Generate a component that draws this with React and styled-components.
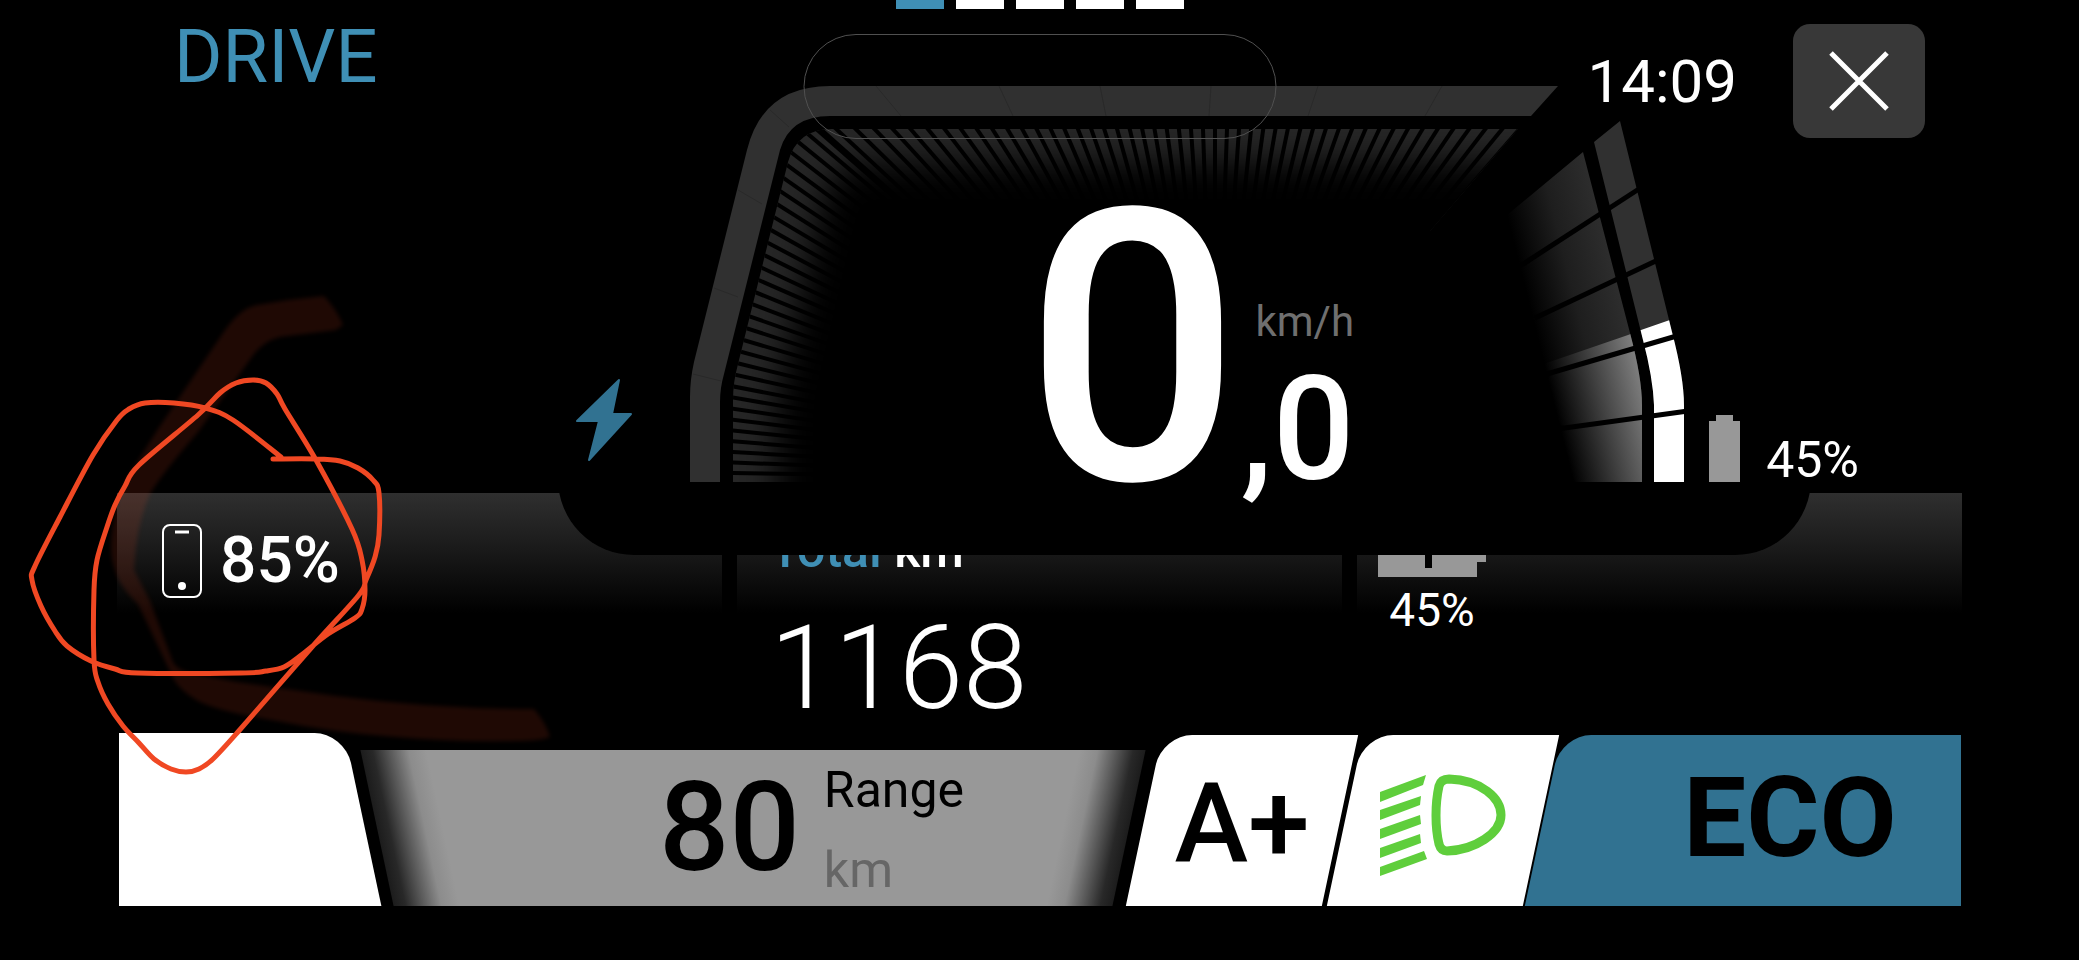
import React from "react";
import styled, { createGlobalStyle } from "styled-components";

const color = {
  black: "#000000",
  white: "#ffffff",
  blue: "#3f8fb5",
  deepBlue: "#317291",
  grey: "#989898",
  dim: "#6f6f6f",
  track: "#303030",
  green: "#5fce3c",
  marker: "#f04823",
};

const GlobalStyle = createGlobalStyle`
  * { box-sizing: border-box; }
  body { margin: 0; background: ${color.black}; }
  button { border: 0; padding: 0; background: none; font: inherit; cursor: pointer; }
  svg { display: block; }
`;

const Page = styled.main`
  position: relative;
  display: flex;
  flex-direction: column;
  min-height: 100vh;
  padding: 0 117px 54px;
  overflow: hidden;
  background: ${color.black};
  color: ${color.white};
  font-family: Roboto, "Liberation Sans", sans-serif;
`;

const Text = styled.span`
  display: block;
  font-size: ${(p) => p.$size}px;
  line-height: ${(p) => p.$line}px;
  font-weight: ${(p) => p.$weight || 400};
  color: ${(p) => p.$color || "inherit"};
  white-space: pre;
`;

/* ---------- header ---------- */

const Header = styled.header`
  position: relative;
  z-index: 2;
  display: grid;
  grid-template-columns: 1fr auto 1fr;
  align-items: start;
`;

const Mode = styled.h1`
  margin: 0;
  padding: 32px 0 0 57px;
  font-size: 74px;
  line-height: 50px;
  font-weight: 400;
  color: ${color.blue};
`;

const Pages = styled.div`
  display: flex;
  gap: 12px;
`;

const PageMark = styled.span`
  width: 48px;
  height: 9px;
  background: ${(p) => (p.$active ? color.blue : color.white)};
`;

const HeaderEnd = styled.div`
  display: flex;
  justify-content: flex-end;
  align-items: center;
  gap: 56px;
  padding: 24px 37px 0 0;
`;

const CloseButton = styled.button`
  display: grid;
  place-items: center;
  width: 132px;
  height: 114px;
  border-radius: 17px;
  background: #383838;
`;

const Pill = styled.div`
  position: absolute;
  top: 34px;
  left: 50%;
  width: 473px;
  height: 105px;
  transform: translateX(-50%);
  border: 1px solid #505050;
  border-radius: 53px;
`;

/* ---------- speed stage ---------- */

const StageRow = styled.section`
  position: relative;
  z-index: 1;
  display: grid;
  grid-template-columns: 441fr 1253fr 151fr;
  margin-top: -52px;
`;

const Stage = styled.div`
  grid-column: 2;
  display: grid;
  align-items: end;
  padding-bottom: 73px;
  border-radius: 0 0 76px 76px;
  background: ${color.black};

  > * {
    grid-area: 1 / 1;
  }
`;

const GaugeDrawing = styled.svg`
  width: 100%;
  height: auto;
`;

const BoltIcon = styled.svg`
  margin: 0 0 20px 17px;
`;

const Readout = styled.div`
  display: flex;
  align-items: flex-end;
  justify-self: center;
  margin-left: 10px;
  padding-bottom: 3px;
`;

const Fraction = styled.div`
  display: flex;
  flex-direction: column;
  gap: 45px;
`;

const Unit = styled.span`
  padding-left: 15px;
  font-size: 42px;
  line-height: 28px;
  color: ${color.dim};
`;

const Charge = styled.div`
  display: flex;
  justify-self: end;
  align-items: flex-end;
  gap: 26px;
  margin-right: -48px;
`;

/* ---------- information cards ---------- */

const Cards = styled.section`
  display: grid;
  grid-template-columns: repeat(3, 1fr);
  gap: 15px;
  min-height: 240px;
  margin-top: -62px;
`;

const Card = styled.article`
  padding: 31px 0 0 ${(p) => p.$inset}px;
  background: linear-gradient(#2f2f2f, #1d1d1d 48px, #000000 120px);
`;

const PhoneRow = styled.div`
  display: flex;
  align-items: center;
  gap: 18px;
`;

const Total = styled.div`
  display: flex;
  flex-direction: column;
  gap: 62px;
  padding-top: 9px;
`;

const Accent = styled.span`
  color: ${color.blue};
`;

const BatteryStack = styled.div`
  display: inline-flex;
  flex-direction: column;
  align-items: center;
  gap: 16px;
`;

/* ---------- footer tiles ---------- */

const Footer = styled.footer`
  display: flex;
  align-items: flex-end;
  margin: 0 1px 0 2px;
  overflow: hidden;
`;

const LeftTile = styled.div`
  position: relative;
  width: 244px;
  height: 173px;
  margin-right: 14px;

  &::before {
    content: "";
    position: absolute;
    inset: 0 0 0 -60px;
    transform: skewX(12deg);
    border-top-right-radius: 30px;
    background: ${color.white};
  }
`;

const fade = "#1c1c1c 0, #282828 12px, #555555 28px, #8c8c8c 48px, #989898 66px";

const RangeTile = styled.div`
  position: relative;
  flex: 1;
  display: flex;
  justify-content: center;
  align-items: center;
  gap: 24px;
  height: 156px;
  margin-right: 16px;
  padding-left: 118px;
  color: ${color.black};

  &::before,
  &::after {
    content: "";
    position: absolute;
    top: 0;
    bottom: 0;
  }

  &::before {
    left: 0;
    right: calc(50% - 40px);
    transform: skewX(12deg);
    background: linear-gradient(90deg, ${fade});
  }

  &::after {
    left: 50%;
    right: 0;
    transform: skewX(-12deg);
    background: linear-gradient(270deg, ${fade});
  }

  > * {
    position: relative;
    z-index: 1;
  }
`;

const RangeLabels = styled.div`
  display: flex;
  flex-direction: column;
  gap: 41px;
  padding-top: 5px;
`;

const Tile = styled.button`
  position: relative;
  display: flex;
  justify-content: center;
  align-items: center;
  width: ${(p) => p.$width}px;
  height: 171px;
  margin-right: ${(p) => p.$gap || 0}px;
  padding: ${(p) => (p.$last ? 0 : 8)}px 0 ${(p) => (p.$last ? 6 : 0)}px ${(p) => p.$inset || 0}px;
  color: ${color.black};

  &::before {
    content: "";
    position: absolute;
    inset: 0 ${(p) => (p.$last ? -60 : 0)}px 0 0;
    transform: skewX(-12deg);
    border-top-left-radius: 30px;
    background: ${(p) => p.$fill || color.white};
  }

  > * {
    position: relative;
  }
`;

const Sketch = styled.svg`
  position: absolute;
  top: 0;
  left: 0;
  z-index: 3;
  pointer-events: none;
`;

/* ---------- drawings ---------- */

const hub = [1215, 480];

const topTicks = Array.from({ length: 51 }, (_, i) => {
  const n = i - 27;
  return [1215 + 12 * n + 0.0038 * n * n * n, 129];
}).filter(([x]) => x > 800);

const sideTicks = Array.from({ length: 31 }, (_, n) => {
  const y = 473 - 10.4 * n - 0.054 * n * n;
  return [y < 380 ? 735 + (380 - y) * 0.25 : 733, y];
});

const seams = [
  [876, 86, 901, 116],
  [999, 86, 1013, 116],
  [1100, 86, 1106, 116],
  [1211, 86, 1209, 116],
  [1318, 86, 1308, 116],
  [1442, 86, 1425, 116],
  [770, 110, 789, 127],
  [738, 190, 762, 204],
  [714, 288, 738, 297],
  [693, 374, 721, 381],
];

const cellGaps = [
  [1520, 266, 1642, 187],
  [1535, 318, 1660, 259],
  [1540, 376, 1680, 335],
  [1550, 430, 1688, 411],
];

const barPath =
  "M1620 121 L1672 332 Q1684 378 1684 405 V482 H1654 V405 Q1653 378 1643 340 L1594 142 Z";
const glowPath =
  "M1583 152 L1630 333 Q1642 378 1642 405 V482 H1570 L1540 367 L1495 225 Z";
const litArea = "M1500 379 L1628 335 L1641 330 L1690 313 V490 H1500 Z";

function Gauge() {
  return (
    <GaugeDrawing viewBox="558 86 1253 396" aria-hidden="true">
      <defs>
        <clipPath id="ring">
          <path d="M733 482 V400 Q733 382 738 364 L788 162 Q797 129 832 129 H1518 L1430 231 V482 Z" />
        </clipPath>
        <clipPath id="lit">
          <path d={litArea} />
        </clipPath>
        <filter id="soft" x="-20%" y="-20%" width="140%" height="140%">
          <feGaussianBlur stdDeviation="18" />
        </filter>
        <linearGradient id="idle" gradientUnits="userSpaceOnUse" x1="1630" y1="333" x2="1542" y2="355">
          <stop offset="0" stopColor="#2d2d2d" />
          <stop offset="0.5" stopColor="#1e1e1e" />
          <stop offset="1" stopColor="#000000" />
        </linearGradient>
        <linearGradient id="charged" gradientUnits="userSpaceOnUse" x1="1630" y1="333" x2="1542" y2="355">
          <stop offset="0" stopColor="#7e7e7e" />
          <stop offset="0.5" stopColor="#404040" />
          <stop offset="1" stopColor="#000000" />
        </linearGradient>
      </defs>

      <path
        fill={color.track}
        d="M690 482 V397 Q690 380 694 362 L747 150 Q763 86 830 86 H1558 L1531 116 H830 Q790 116 780 150 L724 374 Q720 388 720 402 V482 Z"
      />
      {seams.map(([x1, y1, x2, y2]) => (
        <line key={x1} x1={x1} y1={y1} x2={x2} y2={y2} stroke="#292929" />
      ))}

      <g clipPath="url(#ring)">
        <rect x="730" y="120" width="800" height="370" fill="#262626" />
        {[...topTicks, ...sideTicks].map(([x, y]) => (
          <line
            key={`${x}-${y}`}
            x1={x - (hub[0] - x) * 0.05}
            y1={y - (hub[1] - y) * 0.05}
            x2={x + (hub[0] - x) * 0.35}
            y2={y + (hub[1] - y) * 0.35}
            stroke="#000000"
            strokeWidth="4"
          />
        ))}
        <path
          d="M776 640 V400 L822 200 Q830 162 870 162 H1700 V640 Z"
          fill="#000000"
          filter="url(#soft)"
        />
      </g>

      <path d={barPath} fill={color.track} />
      <path d={glowPath} fill="url(#idle)" />
      <g clipPath="url(#lit)">
        <path d={barPath} fill="#ffffff" />
        <path d={glowPath} fill="url(#charged)" />
      </g>
      {cellGaps.map(([x1, y1, x2, y2]) => (
        <line key={x1} x1={x1} y1={y1} x2={x2} y2={y2} stroke="#000000" strokeWidth="5" />
      ))}
    </GaugeDrawing>
  );
}

function HeadlightIcon() {
  return (
    <svg width="128" height="102" viewBox="1378 773 128 102" aria-hidden="true">
      <g fill={color.green}>
        <path d="M1379 791 L1425 774 L1422 784 L1379 801 Z" />
        <path d="M1379 809 L1420 795 L1419 804 L1379 819 Z" />
        <path d="M1379 828 L1419 814 L1420 823 L1379 838 Z" />
        <path d="M1379 847 L1419 833 L1420 842 L1379 857 Z" />
        <path d="M1379 866 L1423 850 L1426 858 L1379 875 Z" />
      </g>
      <path
        d="M1448 778 C1480 779 1500 797 1500 814 C1500 832 1474 849 1446 850 Q1440 850 1438 843 C1434 826 1434 803 1438 785 Q1440 778 1448 778 Z"
        fill="none"
        stroke={color.green}
        strokeWidth="9"
      />
    </svg>
  );
}

/* Turns a list of points into a smooth curve that passes through each one. */
function curve(points) {
  const at = (i) => points[Math.max(0, Math.min(points.length - 1, i))];
  return points.slice(1).reduce((path, end, i) => {
    const [before, start, after] = [at(i - 1), at(i), at(i + 2)];
    const c1 = [start[0] + (end[0] - before[0]) / 6, start[1] + (end[1] - before[1]) / 6];
    const c2 = [end[0] - (after[0] - start[0]) / 6, end[1] - (after[1] - start[1]) / 6];
    return `${path} C${c1} ${c2} ${end}`;
  }, `M${points[0]}`);
}

const loop = [
  [273, 459], [316, 459], [340, 461], [358, 468], [373, 480], [379, 493], [379, 535], [375, 557],
  [366, 580], [358, 596], [312, 647], [237, 733], [213, 759], [199, 769], [186, 772], [171, 769],
  [154, 759], [139, 743], [123, 726], [108, 704], [98, 682], [94, 660], [94, 590], [97, 560],
  [107, 527], [115, 505], [125, 486], [139, 465], [198, 415], [220, 393], [236, 383], [253, 380],
  [266, 383], [277, 394], [285, 409], [316, 460], [352, 529], [362, 560], [365, 590], [362, 609],
  [355, 618], [328, 634], [300, 656], [284, 667], [266, 671], [241, 673], [138, 673], [115, 669],
  [91, 661], [67, 646], [55, 631], [41, 606], [32, 580], [35, 566], [60, 517], [93, 455],
  [117, 420], [129, 409], [145, 403], [174, 403], [205, 408], [233, 420], [281, 457],
];

const brush =
  "M257 305 Q290 299 324 296 Q337 310 343 325 L336 330 L280 337 Q264 341 254 354 L198 432 Q160 476 150 494 Q136 525 134 570 L150 601 L173 662 Q176 669 190 673 L237 682 L336 696 Q435 709 534 709 Q546 723 550 737 Q540 741 514 741 Q450 742 395 737 Q330 732 277 721 Q220 712 198 701 Q182 692 174 680 L138 604 Q119 586 115 570 Q108 553 113 525 Q116 500 126 480 L158 429 L221 336 Q239 308 257 305 Z";

export default function App() {
  return (
    <>
      <GlobalStyle />
      <Page>
        <Header>
          <Mode>DRIVE</Mode>
          <Pages>
            {[true, false, false, false, false].map((active, i) => (
              <PageMark key={i} $active={active} />
            ))}
          </Pages>
          <HeaderEnd>
            <Text as="time" $size={60} $line={43}>14:09</Text>
            <CloseButton type="button" aria-label="Close">
              <svg width="62" height="62" viewBox="0 0 62 62" aria-hidden="true">
                <path d="M3 3 L59 59 M59 3 L3 59" stroke="#ffffff" strokeWidth="5" />
              </svg>
            </CloseButton>
          </HeaderEnd>
          <Pill />
        </Header>

        <StageRow>
          <Stage>
            <Gauge />
            <BoltIcon width="58" height="84" viewBox="575 378 58 84" aria-hidden="true">
              <path
                d="M619 380 L577 421 H599 L589 460 L631 414 H612 Z"
                fill={color.deepBlue}
                stroke={color.deepBlue}
                strokeWidth="2"
                strokeLinejoin="round"
              />
            </BoltIcon>
            <Readout>
              <Text $size={380} $line={260} $weight={500}>0</Text>
              <Fraction>
                <Unit>km/h</Unit>
                <Text $size={144} $line={98} $weight={500}>,0</Text>
              </Fraction>
            </Readout>
            <Charge>
              <svg width="31" height="67" viewBox="0 0 31 67" aria-hidden="true">
                <path d="M7 0 H24 V6 H31 V67 H0 V6 H7 Z" fill={color.grey} />
              </svg>
              <Text $size={50} $line={44}>45%</Text>
            </Charge>
          </Stage>
        </StageRow>

        <Cards>
          <Card $inset={45}>
            <PhoneRow>
              <svg width="40" height="74" viewBox="0 0 40 74" aria-hidden="true">
                <rect x="1" y="1" width="38" height="72" rx="7" fill="none" stroke="#ffffff" strokeWidth="2" />
                <path d="M13 8 H27" stroke="#ffffff" strokeWidth="3" />
                <circle cx="20" cy="62" r="4" fill="#ffffff" />
              </svg>
              <Text $size={64} $line={46} $weight={500}>85%</Text>
            </PhoneRow>
          </Card>
          <Card $inset={33}>
            <Total>
              <Text $size={50} $line={34} $weight={500}><Accent>Total</Accent> km</Text>
              <Text $size={116} $line={79} $weight={300}>1168</Text>
            </Total>
          </Card>
          <Card $inset={21}>
            <BatteryStack>
              <svg width="108" height="53" viewBox="0 0 108 53" aria-hidden="true">
                <path d="M0 0 H99 V14 H108 V38 H99 V53 H0 Z" fill={color.grey} />
                <path d="M47 10 H54 V44 H47 Z" fill="#000000" />
              </svg>
              <Text $size={46} $line={35}>45%</Text>
            </BatteryStack>
          </Card>
        </Cards>

        <Footer>
          <LeftTile />
          <RangeTile>
            <Text $size={124} $line={88} $weight={500}>80</Text>
            <RangeLabels>
              <Text $size={50} $line={39}>Range</Text>
              <Text $size={50} $line={39} $color="#666666">km</Text>
            </RangeLabels>
          </RangeTile>
          <Tile type="button" $width={196} $gap={5}>
            <Text $size={111} $line={79} $weight={500}>A+</Text>
          </Tile>
          <Tile type="button" aria-label="Low beam" $width={196} $gap={2}>
            <HeadlightIcon />
          </Tile>
          <Tile type="button" $width={418} $inset={76} $fill={color.deepBlue} $last>
            <Text $size={112} $line={93} $weight={700}>ECO</Text>
          </Tile>
        </Footer>

        <Sketch width="620" height="800" viewBox="0 0 620 800" aria-hidden="true">
          <defs>
            <filter id="smudge">
              <feGaussianBlur stdDeviation="2" />
            </filter>
          </defs>
          <path d={brush} fill={color.marker} opacity="0.13" filter="url(#smudge)" />
          <path
            d={curve(loop)}
            fill="none"
            stroke={color.marker}
            strokeWidth="5"
            strokeLinecap="round"
            strokeLinejoin="round"
          />
        </Sketch>
      </Page>
    </>
  );
}
